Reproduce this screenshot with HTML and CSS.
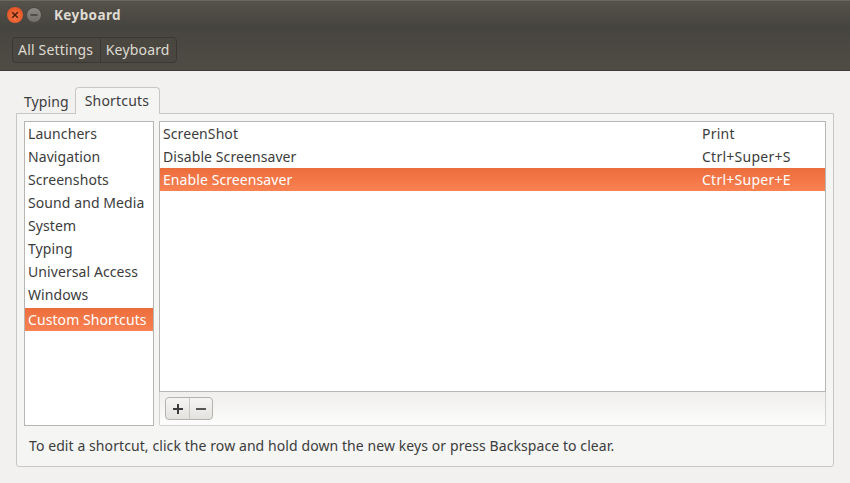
FILE: index.html
```html
<!DOCTYPE html>
<html lang="en">
<head>
<meta charset="utf-8">
<title>Keyboard</title>
<link rel="stylesheet" href="styles.css">
</head>
<body>
<header class="titlebar">
  <span class="winbtn close"><svg width="8" height="8" viewBox="0 0 8 8"><path d="M1.2 1.2L6.8 6.8M6.8 1.2L1.2 6.8" stroke="#4a1a08" stroke-width="1.4"/></svg></span>
  <span class="winbtn min"><svg width="8" height="8" viewBox="0 0 8 8"><path d="M0.5 4H7.5" stroke="#3c3b37" stroke-width="1.4"/></svg></span>
  <span class="wintitle">Keyboard</span>
</header>
<nav class="toolbar">
  <div class="crumbs">
    <span class="crumb">All Settings</span>
    <span class="crumb">Keyboard</span>
  </div>
</nav>
<main class="content">
  <div class="tabs">
    <span class="tab">Typing</span>
    <span class="tab active">Shortcuts</span>
  </div>
  <section class="panel">
    <div class="columns">
      <ul class="cats">
        <li>Launchers</li>
        <li>Navigation</li>
        <li>Screenshots</li>
        <li>Sound and Media</li>
        <li>System</li>
        <li>Typing</li>
        <li>Universal Access</li>
        <li>Windows</li>
        <li class="selected custom">Custom Shortcuts</li>
      </ul>
      <div class="right">
        <div class="list">
          <div class="row"><span>ScreenShot</span><span class="keys">Print</span></div>
          <div class="row"><span>Disable Screensaver</span><span class="keys">Ctrl+Super+S</span></div>
          <div class="row selected"><span>Enable Screensaver</span><span class="keys">Ctrl+Super+E</span></div>
        </div>
        <div class="listbar">
          <div class="btns">
            <span class="btn"><svg width="12" height="12" viewBox="0 0 12 12"><path d="M1 6H11M6 1V11" stroke="#3c3c3c" stroke-width="2"/></svg></span>
            <span class="btn"><svg width="12" height="12" viewBox="0 0 12 12"><path d="M1 6H11" stroke="#555" stroke-width="2"/></svg></span>
          </div>
        </div>
      </div>
    </div>
    <p class="hint">To edit a shortcut, click the row and hold down the new keys or press Backspace to clear.</p>
  </section>
</main>
</body>
</html>
```
FILE: styles.css
```css
* { box-sizing: border-box; }
html, body { margin: 0; padding: 0; }
body {
  width: 850px;
  height: 483px;
  overflow: hidden;
  background: #f2f1f0;
  font-family: "Noto Sans", "Open Sans", sans-serif;
  font-size: 14px;
  letter-spacing: 0.085px;
  color: #3c3c3c;
}
.titlebar {
  height: 29px;
  display: flex;
  align-items: center;
  padding: 0 0 0 7px;
  background: linear-gradient(#55524b, #45433d);
  border-top: 1px solid #6a675f;
}
.winbtn {
  width: 16px;
  height: 16px;
  border-radius: 50%;
  display: flex;
  align-items: center;
  justify-content: center;
  margin-right: 3px;
}
.close { background: radial-gradient(circle at 50% 60%, #f5764a, #dd4814); }
.min { background: linear-gradient(#8a8880, #716f67); border: 1px solid #4a4842; }
.wintitle {
  margin-left: 9px;
  font-size: 13.5px;
  font-weight: 700;
  letter-spacing: 0.4px;
  color: #dfdbd2;
}
.toolbar {
  height: 42px;
  padding: 8px 0 0 12px;
  background: linear-gradient(#47453f, #4f4c45);
  border-bottom: 1px solid #3c3b37;
}
.crumbs {
  display: inline-flex;
  height: 26px;
  border: 1px solid #3a3833;
  border-radius: 4px;
  background: #4a4741;
}
.crumb {
  padding: 0 6.5px 0 5px;
  line-height: 24px;
  font-size: 14px;
  letter-spacing: 0.18px;
  color: #dfdbd2;
}
.crumb + .crumb { border-left: 1px solid #3a3833; }
.content { padding: 15px 16px 0; }
.tabs {
  display: flex;
  height: 27px;
  padding-left: 1px;
  align-items: flex-end;
}
.tab {
  height: 23px;
  padding: 0 6px 0 7px;
  line-height: 24px;
}
.tab.active {
  height: 27px;
  padding: 0 9.5px 0 9px;
  line-height: 25px;
  letter-spacing: 0.2px;
  background: #f5f5f4;
  border: 1px solid #c9c7c3;
  border-bottom: 0;
  border-radius: 4px 4px 0 0;
  margin-bottom: -1px;
  position: relative;
}
.panel {
  height: 354px;
  padding: 7px 7px 0;
  background: #f5f5f4;
  border: 1px solid #c9c7c3;
  border-radius: 0 0 3px 3px;
}
.columns { display: flex; gap: 5px; height: 305px; }
.cats {
  list-style: none;
  margin: 0;
  padding: 0;
  width: 130px;
  background: #fff;
  border: 1px solid #b8b6b2;
}
.cats li { height: 23px; line-height: 24px; padding-left: 3px; }
.cats li.custom { margin-top: 2px; }
.right { width: 667px; display: flex; flex-direction: column; }
.list {
  height: 271px;
  background: #fff;
  border: 1px solid #b8b6b2;
}
.row {
  display: flex;
  height: 23px;
  line-height: 24px;
  padding-left: 3px;
}
.row span:first-child { width: 539px; }
.keys { letter-spacing: 0.25px; }
.selected {
  background: linear-gradient(#ec6d3c, #f98152);
  color: #fff;
}
.listbar {
  flex: 1;
  padding: 5px;
  background: linear-gradient(#efeeec, #fdfdfd);
  border: 1px solid #d4d2ce;
  border-top: 0;
  border-radius: 0 0 2px 2px;
}
.btns {
  display: inline-flex;
  height: 23px;
  border: 1px solid #b5b3ae;
  border-radius: 4px;
  background: linear-gradient(#f6f5f4, #e4e2df);
}
.btn {
  width: 23px;
  display: flex;
  align-items: center;
  justify-content: center;
}
.btn + .btn { border-left: 1px solid #c9c7c3; }
.hint { margin: 10px 0 0 5px; line-height: 20px; }
```
